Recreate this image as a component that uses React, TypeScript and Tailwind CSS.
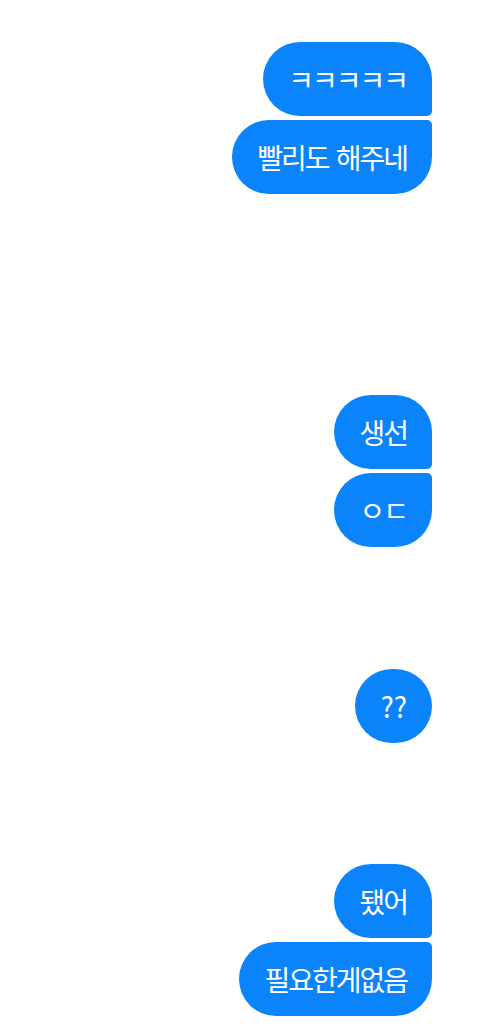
const bubble =
  "flex h-[74px] items-center bg-[#0b84fb] px-[25px] text-[28px] leading-none tracking-[-2px] [word-spacing:3px] text-white";

export default function App() {
  return (
    <div className="min-h-[1035px] w-[480px] bg-white font-['Noto_Sans_CJK_KR','Noto_Sans',sans-serif]">
      <div className="flex flex-col items-end pr-[48px] pt-[42px]">
        <div className="flex flex-col items-end gap-[4px]">
          <div className={`${bubble} rounded-[37px] rounded-br-[5px]`}>ㅋㅋㅋㅋㅋ</div>
          <div className={`${bubble} rounded-[37px] rounded-tr-[5px]`}>빨리도 해주네</div>
        </div>

        <div className="mt-[201px] flex flex-col items-end gap-[4px]">
          <div className={`${bubble} rounded-[37px] rounded-br-[5px]`}>생선</div>
          <div className={`${bubble} rounded-[37px] rounded-tr-[5px]`}>ㅇㄷ</div>
        </div>

        <div className="mt-[122px]">
          <div className={`${bubble} rounded-full tracking-normal`}>??</div>
        </div>

        <div className="mt-[121px] flex flex-col items-end gap-[4px]">
          <div className={`${bubble} rounded-[37px] rounded-br-[5px]`}>됐어</div>
          <div className={`${bubble} rounded-[37px] rounded-tr-[5px]`}>필요한게없음</div>
        </div>
      </div>
    </div>
  );
}
